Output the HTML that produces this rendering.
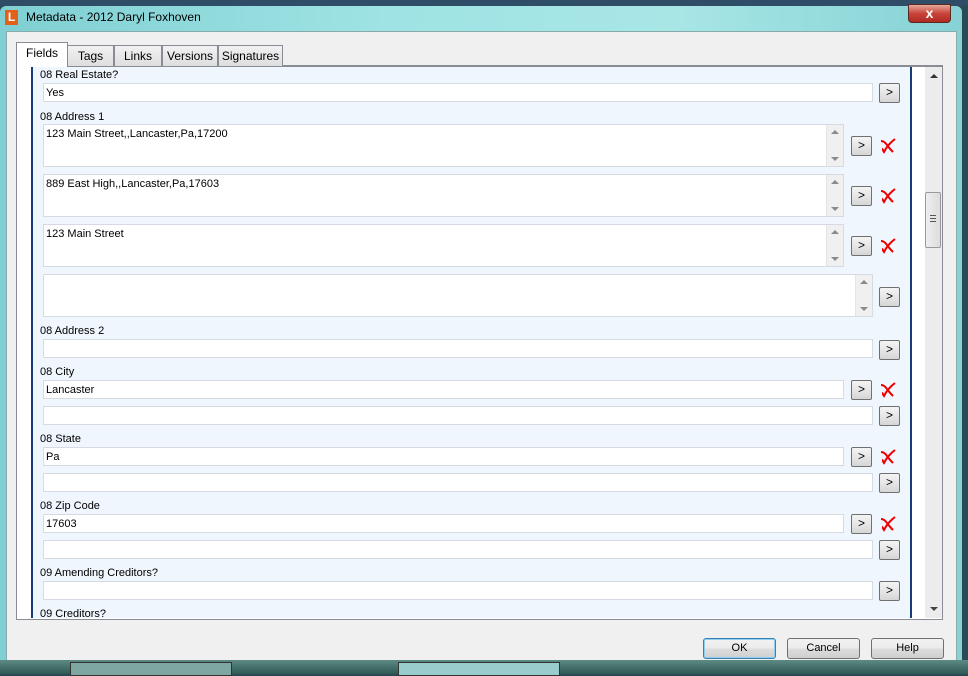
<!DOCTYPE html><html><head><style>
body{margin:0;width:968px;height:674px;position:relative;overflow:hidden;font-family:"Liberation Sans",sans-serif;font-size:11px;color:#000;background:#2a4a55}
.a{position:absolute}
.inp{position:absolute;background:#fff;border:1px solid #d6dbe3;box-sizing:border-box;padding:3px 2px;font-size:11px}
.btn{position:absolute;width:21px;height:20px;box-sizing:border-box;border:1px solid #707070;border-radius:2px;background:linear-gradient(#f4f4f4,#e6e6e6 50%,#d6d6d6);font-size:12px;text-align:center;line-height:17px;color:#000}
.lbl{position:absolute;left:40px;font-size:11px}
.sb{position:absolute;right:0;top:0;bottom:0;width:16px;background:#f0f0f0;border-left:1px solid #e4e4e4}
.sb:before{content:"";position:absolute;left:4px;top:5px;border:4px solid transparent;border-bottom:4px solid #8a8a8a;border-top:0}
.sb:after{content:"";position:absolute;left:4px;bottom:5px;border:4px solid transparent;border-top:4px solid #8a8a8a;border-bottom:0}
.x{position:absolute;width:16px;height:16px}
.tab{position:absolute;top:44px;height:21px;box-sizing:border-box;border:1px solid #898c95;border-bottom:none;background:linear-gradient(#f2f2f2,#dedede);font-size:12px;line-height:20px;text-align:center}
.db{position:absolute;top:638px;width:73px;height:21px;box-sizing:border-box;border:1px solid #707070;border-radius:3px;background:linear-gradient(#f2f2f2,#ebebeb 50%,#dddddd 51%,#cfcfcf);font-size:11px;text-align:center;line-height:19px}
</style></head><body>
<div class="a" style="left:0;top:0;width:968px;height:6px;background:#2f4d66"></div>
<div class="a" style="left:0;top:6px;width:962px;height:662px;background:linear-gradient(90deg,#7fcfd3,#9fe3e4 40%,#a8e6e6 70%,#86d2d5);border-radius:6px 6px 0 0"></div>
<div class="a" style="left:5px;top:10px;width:13px;height:15px;background:#e2601a;color:#fff;font-weight:bold;font-size:12px;text-align:center;line-height:15px">L</div>
<div class="a" style="left:26px;top:10px;font-size:12px">Metadata - 2012 Daryl Foxhoven</div>
<div class="a" style="left:908px;top:4px;width:43px;height:19px;border:1px solid #5a2a22;border-radius:0 0 4px 4px;background:linear-gradient(#e8a89a,#c8443a 50%,#b02a20);box-sizing:border-box;color:#fff;font-weight:bold;font-size:14px;text-align:center;line-height:16px">x</div>
<div class="a" style="left:6px;top:31px;width:951px;height:630px;background:#f0f0f0;border:1px solid #8aa;box-sizing:border-box"></div>
<div class="a" style="left:0;top:660px;width:968px;height:14px;background:linear-gradient(#5d8a85,#2e5955)"></div>
<div class="a" style="left:70px;top:662px;width:160px;height:12px;background:#7ea7a2;border:1px solid #333"></div>
<div class="a" style="left:398px;top:662px;width:160px;height:12px;background:#9cc;border:1px solid #333"></div>
<div class="a" style="left:16px;top:65px;width:927px;height:555px;border:1px solid #898c95;border-top:2px solid #898c95;box-sizing:border-box;background:#fff"></div>
<div class="a" style="left:17px;top:67px;width:14px;height:551px;background:#fff"></div>
<div class="a" style="left:31px;top:67px;width:881px;height:551px;background:#f0f6fd;border-left:2px solid #1a3b7a;border-right:2px solid #1a3b7a;box-sizing:border-box"></div>
<div class="a" style="left:925px;top:67px;width:17px;height:551px;background:#ececec"></div>
<div class="a" style="left:930px;top:74px;border:4px solid transparent;border-bottom:4px solid #333;border-top:0"></div>
<div class="a" style="left:930px;top:607px;border:4px solid transparent;border-top:4px solid #444;border-bottom:0"></div>
<div class="a" style="left:925px;top:192px;width:16px;height:56px;border:1px solid #999;border-radius:2px;box-sizing:border-box;background:linear-gradient(90deg,#eee,#ddd)"><div style="margin:22px 0 0 4px;width:6px;height:7px;border-top:1px solid #555;border-bottom:1px solid #555;box-sizing:border-box"><div style="margin-top:2px;height:1px;background:#555"></div></div></div>
<div class="tab" style="left:67px;width:47px;top:45px">Tags</div>
<div class="tab" style="left:114px;width:48px;top:45px">Links</div>
<div class="tab" style="left:162px;width:56px;top:45px">Versions</div>
<div class="tab" style="left:218px;width:65px;top:45px">Signatures</div>
<div class="tab" style="left:16px;width:52px;top:42px;height:25px;background:#fff;z-index:2">Fields</div>
<div class="lbl" style="top:69px">08 Real Estate?</div>
<div class="inp" style="left:43px;top:83px;width:830px;height:19px">Yes</div>
<div class="btn" style="left:879px;top:83px">&gt;</div>
<div class="lbl" style="top:111px">08 Address 1</div>
<div class="inp" style="left:43px;top:124px;width:801px;height:43px">123 Main Street,,Lancaster,Pa,17200<div class="sb"></div></div>
<div class="btn" style="left:851px;top:136px">&gt;</div>
<div class="inp" style="left:43px;top:174px;width:801px;height:43px">889 East High,,Lancaster,Pa,17603<div class="sb"></div></div>
<div class="btn" style="left:851px;top:186px">&gt;</div>
<div class="inp" style="left:43px;top:224px;width:801px;height:43px">123 Main Street<div class="sb"></div></div>
<div class="btn" style="left:851px;top:236px">&gt;</div>
<div class="inp" style="left:43px;top:274px;width:830px;height:43px"><div class="sb"></div></div>
<div class="btn" style="left:879px;top:287px">&gt;</div>
<div class="lbl" style="top:325px">08 Address 2</div>
<div class="inp" style="left:43px;top:339px;width:830px;height:19px"></div>
<div class="btn" style="left:879px;top:340px">&gt;</div>
<div class="lbl" style="top:366px">08 City</div>
<div class="inp" style="left:43px;top:380px;width:801px;height:19px">Lancaster</div>
<div class="btn" style="left:851px;top:380px">&gt;</div>
<div class="inp" style="left:43px;top:406px;width:830px;height:19px"></div>
<div class="btn" style="left:879px;top:406px">&gt;</div>
<div class="lbl" style="top:433px">08 State</div>
<div class="inp" style="left:43px;top:447px;width:801px;height:19px">Pa</div>
<div class="btn" style="left:851px;top:447px">&gt;</div>
<div class="inp" style="left:43px;top:473px;width:830px;height:19px"></div>
<div class="btn" style="left:879px;top:473px">&gt;</div>
<div class="lbl" style="top:500px">08 Zip Code</div>
<div class="inp" style="left:43px;top:514px;width:801px;height:19px">17603</div>
<div class="btn" style="left:851px;top:514px">&gt;</div>
<div class="inp" style="left:43px;top:540px;width:830px;height:19px"></div>
<div class="btn" style="left:879px;top:540px">&gt;</div>
<div class="lbl" style="top:567px">09 Amending Creditors?</div>
<div class="inp" style="left:43px;top:581px;width:830px;height:19px"></div>
<div class="btn" style="left:879px;top:581px">&gt;</div>
<div class="a" style="left:40px;top:608px;height:10px;overflow:hidden;font-size:11px">09 Creditors?</div>
<svg class="x" style="left:880px;top:138px" viewBox="0 0 16 16"><path d="M1 3 C3 3 5 4 7 7 C9 10 11 12 13 14 M15 1 C11 4 7 8 4 14 C3 13 3 11 2 11" stroke="#e00" stroke-width="2" fill="none"/></svg>
<svg class="x" style="left:880px;top:188px" viewBox="0 0 16 16"><path d="M1 3 C3 3 5 4 7 7 C9 10 11 12 13 14 M15 1 C11 4 7 8 4 14 C3 13 3 11 2 11" stroke="#e00" stroke-width="2" fill="none"/></svg>
<svg class="x" style="left:880px;top:238px" viewBox="0 0 16 16"><path d="M1 3 C3 3 5 4 7 7 C9 10 11 12 13 14 M15 1 C11 4 7 8 4 14 C3 13 3 11 2 11" stroke="#e00" stroke-width="2" fill="none"/></svg>
<svg class="x" style="left:880px;top:382px" viewBox="0 0 16 16"><path d="M1 3 C3 3 5 4 7 7 C9 10 11 12 13 14 M15 1 C11 4 7 8 4 14 C3 13 3 11 2 11" stroke="#e00" stroke-width="2" fill="none"/></svg>
<svg class="x" style="left:880px;top:449px" viewBox="0 0 16 16"><path d="M1 3 C3 3 5 4 7 7 C9 10 11 12 13 14 M15 1 C11 4 7 8 4 14 C3 13 3 11 2 11" stroke="#e00" stroke-width="2" fill="none"/></svg>
<svg class="x" style="left:880px;top:516px" viewBox="0 0 16 16"><path d="M1 3 C3 3 5 4 7 7 C9 10 11 12 13 14 M15 1 C11 4 7 8 4 14 C3 13 3 11 2 11" stroke="#e00" stroke-width="2" fill="none"/></svg>
<div class="db" style="left:703px;border-color:#3c7fb1;box-shadow:inset 0 0 0 1px #8fd0f0">OK</div>
<div class="db" style="left:787px">Cancel</div>
<div class="db" style="left:871px">Help</div>
</body></html>
